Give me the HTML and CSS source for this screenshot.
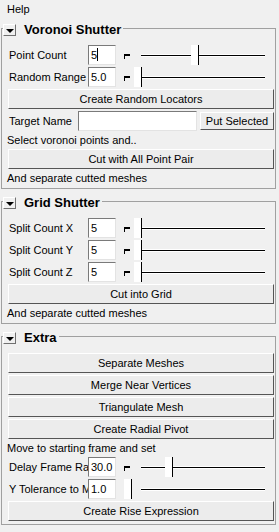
FILE: index.html
```html
<!DOCTYPE html>
<html lang="en">
<head>
    <meta charset="UTF-8">
    <title>Shutter Tools</title>
    <link rel="stylesheet" href="styles.css">
</head>
<body>
    <div class="menubar">Help</div>

    <fieldset class="frame">
        <legend class="frame-head"><span class="arrow"></span><span class="frame-title">Voronoi Shutter</span></legend>
        <div class="frame-body">
            <div class="row">
                <span class="label">Point Count</span>
                <div class="field">5<span class="caret"></span></div>
                <div class="slider"><span class="tick"></span><span class="track"></span><span class="handle" style="left:75px"></span></div>
            </div>
            <div class="row">
                <span class="label">Random Range</span>
                <div class="field">5.0</div>
                <div class="slider"><span class="tick"></span><span class="track"></span><span class="handle" style="left:18px"></span></div>
            </div>
            <button class="btn">Create Random Locators</button>
            <div class="row">
                <span class="label short">Target Name</span>
                <div class="field wide"></div>
                <button class="btn small">Put Selected</button>
            </div>
            <div class="note">Select voronoi points and..</div>
            <button class="btn">Cut with All Point Pair</button>
            <div class="note">And separate cutted meshes</div>
        </div>
    </fieldset>

    <fieldset class="frame">
        <legend class="frame-head"><span class="arrow"></span><span class="frame-title">Grid Shutter</span></legend>
        <div class="frame-body">
            <div class="row">
                <span class="label">Split Count X</span>
                <div class="field">5</div>
                <div class="slider"><span class="tick"></span><span class="track"></span><span class="handle" style="left:18px"></span></div>
            </div>
            <div class="row">
                <span class="label">Split Count Y</span>
                <div class="field">5</div>
                <div class="slider"><span class="tick"></span><span class="track"></span><span class="handle" style="left:18px"></span></div>
            </div>
            <div class="row">
                <span class="label">Split Count Z</span>
                <div class="field">5</div>
                <div class="slider"><span class="tick"></span><span class="track"></span><span class="handle" style="left:18px"></span></div>
            </div>
            <button class="btn">Cut into Grid</button>
            <div class="note">And separate cutted meshes</div>
        </div>
    </fieldset>

    <fieldset class="frame">
        <legend class="frame-head"><span class="arrow"></span><span class="frame-title">Extra</span></legend>
        <div class="frame-body">
            <button class="btn">Separate Meshes</button>
            <button class="btn">Merge Near Vertices</button>
            <button class="btn">Triangulate Mesh</button>
            <button class="btn">Create Radial Pivot</button>
            <div class="note">Move to starting frame and set</div>
            <div class="row">
                <span class="label">Delay Frame Range</span>
                <div class="field">30.0</div>
                <div class="slider"><span class="tick"></span><span class="track"></span><span class="handle" style="left:49px"></span></div>
            </div>
            <div class="row">
                <span class="label">Y Tolerance to Move</span>
                <div class="field">1.0</div>
                <div class="slider"><span class="tick"></span><span class="track"></span><span class="handle" style="left:8px"></span></div>
            </div>
            <button class="btn">Create Rise Expression</button>
        </div>
    </fieldset>
</body>
</html>
```

FILE: styles.css
```css
body {
    margin: 0;
    background-color: #f0f0f0;
    font-family: "Liberation Sans", Arial, sans-serif;
    font-size: 11px;
    color: #000;
}

.menubar {
    height: 18px;
    line-height: 18px;
    padding-left: 7px;
}

.frame {
    margin: 2px 3px 0 1px;
    padding: 9px 1px 3px 6px;
    border: 1px solid #a0a0a0;
    min-width: 0;
}

.frame + .frame {
    margin-top: 4px;
}

.frame-head {
    display: flex;
    align-items: center;
    height: 12px;
    padding: 4px 2px 0 0;
    margin-left: -5px;
}

.arrow {
    width: 13px;
    height: 12px;
    box-sizing: border-box;
    border: 1px solid;
    border-color: #fff #707070 #707070 #fff;
    display: flex;
    align-items: center;
    justify-content: center;
    margin-right: 8px;
}

.arrow::before {
    content: "";
    border-top: 4px solid #000;
    border-left: 4px solid transparent;
    border-right: 4px solid transparent;
    margin-top: 1px;
}

.frame-title {
    font-weight: bold;
    font-size: 13px;
    line-height: 12px;
}

.frame-body {
    display: flex;
    flex-direction: column;
    gap: 2px;
}

.row {
    display: flex;
    align-items: center;
    height: 20px;
}

.label {
    flex: none;
    width: 80px;
    padding-left: 1px;
    box-sizing: border-box;
    white-space: nowrap;
    overflow: hidden;
}

.label.short {
    width: 70px;
}

.field {
    flex: none;
    width: 28px;
    height: 20px;
    box-sizing: border-box;
    background-color: #fff;
    border: 1px solid;
    border-color: #7a7a7a #e3e3e3 #e3e3e3 #7a7a7a;
    padding-left: 2px;
    line-height: 18px;
    white-space: nowrap;
    overflow: hidden;
}

.field.wide {
    flex: 1;
}

.caret {
    display: inline-block;
    width: 1px;
    height: 13px;
    background-color: #000;
    vertical-align: -2px;
}

.slider {
    flex: 1;
    align-self: stretch;
    display: flex;
    align-items: center;
    position: relative;
    padding-left: 8px;
}

.tick {
    width: 5px;
    height: 3px;
    border-top: 2px solid #000;
    border-left: 1px solid #000;
    margin-top: 3px;
}

.track {
    flex: 1;
    height: 1px;
    background-color: #000;
    border-top: 1px solid #fff;
    border-bottom: 1px solid #fff;
    margin: 0 9px 0 11px;
}

.handle {
    position: absolute;
    top: 0;
    width: 8px;
    height: 20px;
    box-sizing: border-box;
    background-color: #fff;
    border-right: 1px solid #000;
}

.btn {
    height: 20px;
    box-sizing: border-box;
    margin: 0;
    padding: 0;
    background-color: #ececec;
    border: 1px solid;
    border-color: #fff #555 #555 #fff;
    font: inherit;
    color: #000;
    text-align: center;
    line-height: 18px;
}

.btn.small {
    flex: none;
    width: 74px;
    height: 18px;
    line-height: 16px;
    margin-left: 3px;
}

.note {
    height: 14px;
    line-height: 14px;
    margin-left: -1px;
    white-space: nowrap;
}
```
